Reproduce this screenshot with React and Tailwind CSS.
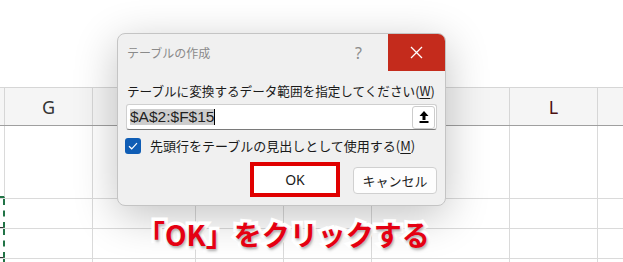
import React from "react";

const FONT = "font-['Noto_Sans','Noto_Sans_CJK_JP',sans-serif]";

function GridRow({ h, first, last }) {
  const cells = [0, 1, 2, 3, 4, 5, 6, 7];
  return (
    <div
      className={`grid grid-cols-[5px_88px_103px_88px_88px_138px_88px_1fr] ${h} ${last ? "" : "border-b border-[#dadada]"}`}
    >
      {cells.map((i) => (
        <div
          key={i}
          className={
            i === 0
              ? first
              : i === 7
              ? ""
              : "border-r border-[#dadada]"
          }
        />
      ))}
    </div>
  );
}

export default function App() {
  return (
    <div className={`relative w-[623px] h-[262px] overflow-hidden bg-white ${FONT}`}>
      {/* spreadsheet */}
      <div className="h-[87px] bg-white" />
      <div className="grid grid-cols-[5px_88px_417px_88px_1fr] h-[39px] bg-[#f5f5f5] border-t border-[#d6d6d6] border-b border-b-[#9f9f9f] text-[18px] text-[#333] leading-none">
        <div className="border-r border-[#d6d6d6]" />
        <div className="border-r border-[#d6d6d6] flex items-center justify-center">G</div>
        <div className="border-r border-[#d6d6d6]" />
        <div className="border-r border-[#d6d6d6] flex items-center justify-center text-[#4a1010]">L</div>
        <div />
      </div>
      <GridRow h="h-[73px]" first="border-r border-[#dadada] border-b-2 border-b-[#217346]" />
      <GridRow h="h-[30px]" first="border-r-2 border-dashed border-r-[#217346] border-b border-b-[#333]" />
      <GridRow h="h-[30px]" first="border-r-2 border-dashed border-r-[#217346] border-b border-b-[#333]" />
      <GridRow h="h-[10px]" first="border-r-2 border-dashed border-r-[#217346]" last />

      {/* dialog */}
      <div className="absolute left-[117px] top-[33px] w-[329px] h-[173px] bg-[#f0f0f0] border border-[#c4c4c4] rounded-[8px] shadow-[0_10px_44px_rgba(0,0,0,0.24)] flex flex-col">
        <div className="h-[37px] flex items-center">
          <div className="pl-[9px] flex-1 text-[12px] text-[#8a8a8a] font-['Noto_Sans_CJK_JP',sans-serif]">テーブルの作成</div>
          <div className="mr-[26px] text-[16px] text-[#8c8c8c] leading-none">?</div>
          <div className="w-[57px] h-full bg-[#c42b1c] rounded-tr-[7px] flex items-center justify-center">
            <svg width="13" height="13" viewBox="0 0 13 13">
              <path d="M1 1L12 12M12 1L1 12" stroke="white" strokeWidth="1.3" />
            </svg>
          </div>
        </div>
        <div className="px-[8px] flex flex-col">
          <div className="mt-[10px] h-[20px] leading-[20px] pl-[1px] text-[12.6px] text-[#1a1a1a] whitespace-nowrap font-['Noto_Sans_CJK_JP',sans-serif]">
            テーブルに変換するデータ範囲を指定してください(<span className="underline underline-offset-2">W</span>)
          </div>
          <div className="mt-[3px] h-[26px] w-[311px] bg-white border border-[#cfcfcf] border-b-[#7a7a7a] rounded-[3px] flex items-center pl-[3px] pr-[1px]">
            <div className="flex-1 flex items-center">
              <span className="bg-[#cdcdcd] text-[15.5px] leading-[16px] text-[#222] font-['Liberation_Sans',sans-serif]">$A$2:$F$15</span>
              <span className="w-[1px] h-[16px] bg-black" />
            </div>
            <div className="w-[23px] h-[23px] bg-white border border-[#cccccc] rounded-[3px] flex items-center justify-center">
              <svg width="10" height="12" viewBox="0 0 10 12">
                <path d="M5 0L9.5 5H6.5V9H3.5V5H0.5Z" fill="black" />
                <rect x="0.5" y="10" width="9" height="2" fill="black" />
              </svg>
            </div>
          </div>
          <div className="mt-[7px] h-[17px] flex items-center">
            <div className="w-[16px] h-[16px] bg-[#0f5db5] rounded-[3px] flex items-center justify-center -ml-[1px]">
              <svg width="10" height="8" viewBox="0 0 10 8">
                <path d="M1 4.2L3.7 6.8L9 1.2" stroke="white" strokeWidth="1.2" fill="none" />
              </svg>
            </div>
            <div className="ml-[9px] text-[13px] text-[#1a1a1a] whitespace-nowrap font-['Noto_Sans_CJK_JP',sans-serif]">
              先頭行をテーブルの見出しとして使用する(<span className="underline underline-offset-2">M</span>)
            </div>
          </div>
          <div className="mt-[8px] flex justify-end items-start gap-[13px] pr-[0px]">
            <div className="w-[90px] h-[35px] border-4 border-[#e00000] bg-white flex items-center justify-center text-[14px] text-[#1a1a1a]">
              OK
            </div>
            <div className="mt-[5px] w-[84px] h-[27px] bg-[#fdfdfd] border border-[#d0d0d0] rounded-[4px] flex items-center justify-center text-[13px] text-[#1a1a1a] font-['Noto_Sans_CJK_JP',sans-serif]">
              キャンセル
            </div>
          </div>
        </div>
      </div>

      {/* caption */}
      <div className="absolute left-[137px] top-[220px] text-[28px] leading-none font-bold text-[#e50012] whitespace-nowrap font-['Noto_Sans_CJK_JP',sans-serif] [-webkit-text-stroke:7px_white] [paint-order:stroke_fill] [text-shadow:1px_2px_3px_rgba(0,0,0,0.35)]">
        「OK」をクリックする
      </div>
    </div>
  );
}
